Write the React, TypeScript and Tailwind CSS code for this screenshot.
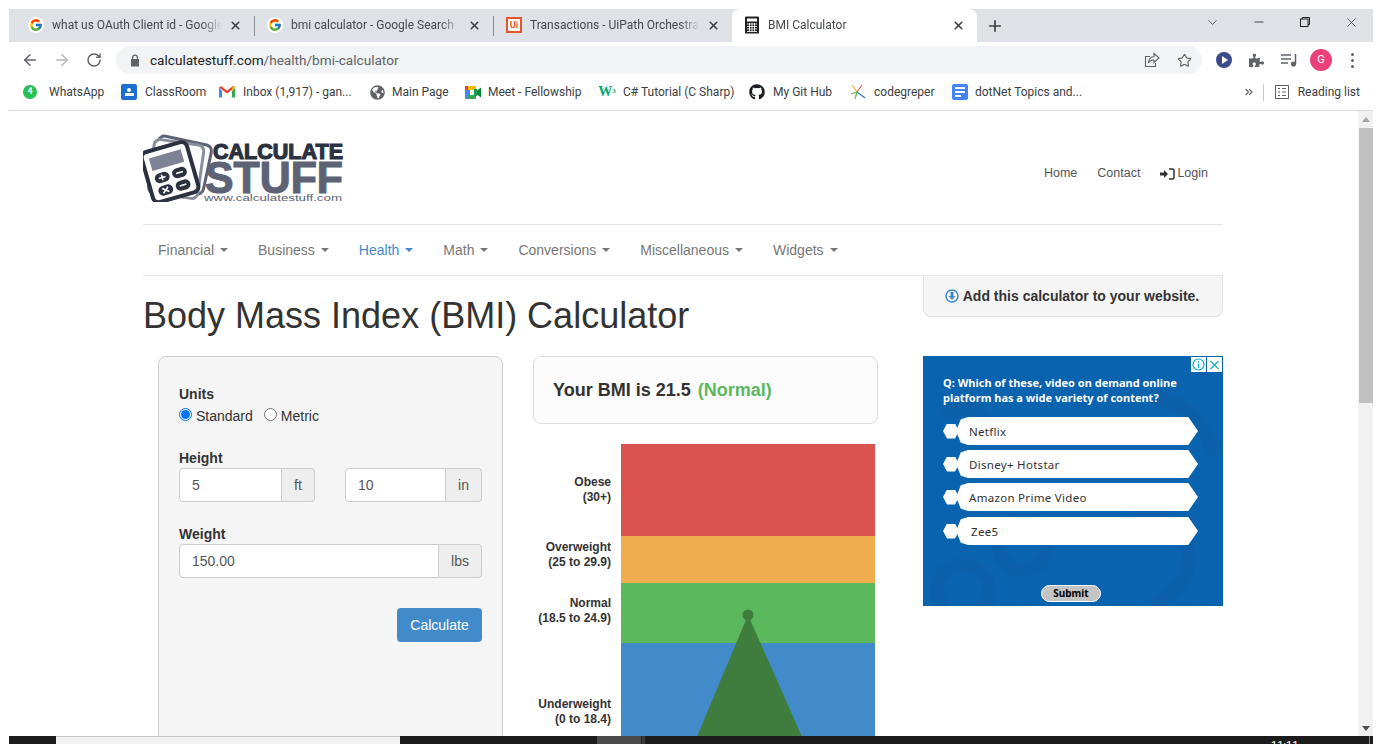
import { ArrowLeft, ArrowRight, RotateCw, Star, X, Plus, Minus, ChevronDown, ChevronsRight } from "lucide-react";
import { FaGithub, FaGlobeAmericas, FaPuzzlePiece } from "react-icons/fa";
import { FcGoogle } from "react-icons/fc";

const GoogleIcon = () => (
    <span className="flex h-4 w-4 items-center justify-center rounded-full bg-white">
        <FcGoogle className="h-[14px] w-[14px]" />
    </span>
);

const CalcIcon = () => (
    <svg width="16" height="18" viewBox="0 0 16 18">
        <rect x="1" y="0.5" width="14" height="17" rx="1" fill="#222" />
        <rect x="3" y="2.5" width="10" height="3" fill="#fff" />
        <path d="M3 8h10M3 10.5h10M3 13h10M3 15.5h10M5.5 7v9M8 7v9M10.5 7v9" stroke="#fff" strokeWidth="0.8" />
    </svg>
);

const UiPathIcon = () => (
    <span className="flex h-4 w-4 items-center justify-center border-2 border-[#e8532b] bg-white text-[9px] font-bold leading-none text-[#e8532b]">Ui</span>
);

const Tab = ({ icon, title, width, active }: { icon: React.ReactNode; title: string; width: string; active?: boolean }) => (
    <div className={`flex h-full shrink-0 items-center pb-px ${width} ${active ? "rounded-t-lg bg-white" : ""}`}>
        <span className="ml-[12px] w-[16px] shrink-0">{icon}</span>
        <span className="ml-[8px] min-w-0 flex-1 overflow-hidden whitespace-nowrap text-[12px] text-[#45494d] [mask-image:linear-gradient(to_right,black_88%,transparent)]">{title}</span>
        <X className="ml-[7px] mr-[12px] h-[13px] w-[13px] shrink-0 text-[#3c4043]" strokeWidth={3} />
    </div>
);

const TabSep = () => <div className="h-5 w-px shrink-0 bg-[#8a8d91]" />;

const Bookmark = ({ icon, label, width, gap = "ml-[8px]" }: { icon: React.ReactNode; label: string; width: string; gap?: string }) => (
    <div className={`flex shrink-0 items-center ${width}`}>
        <span className="flex w-4 shrink-0 justify-center">{icon}</span>
        <span className={`${gap} whitespace-nowrap text-[12px] text-[#3c4043]`}>{label}</span>
    </div>
);

const Logo = () => (
    <svg width="204" height="68" viewBox="0 0 204 68">
        <rect x="11" y="6" width="54" height="50" rx="6" fill="none" stroke="#5d6375" strokeWidth="3" transform="rotate(12 38 31)" />
        <rect x="8" y="8" width="50" height="54" rx="6" fill="#fff" stroke="#8a8f9e" strokeWidth="3" transform="rotate(8 33 35)" />
        <g transform="translate(-2.500 2) rotate(-16 30 36)">
            <rect x="6" y="10" width="47" height="52" rx="6" fill="#fff" stroke="#2c3140" strokeWidth="4" />
            <rect x="13" y="17" width="33" height="13" fill="#7d8394" />
            <rect x="13" y="34" width="15" height="10" rx="5" fill="#2c3140" />
            <rect x="31" y="34" width="15" height="10" rx="5" fill="#2c3140" />
            <rect x="13" y="47" width="15" height="10" rx="5" fill="#2c3140" />
            <rect x="31" y="47" width="15" height="10" rx="5" fill="#2c3140" />
            <path d="M17 39h7M20.5 36v6M35 39h7M17.5 49.5l6 5M23.5 49.5l-6 5M35 52h7" stroke="#fff" strokeWidth="1.6" />
        </g>
        <text x="70" y="25" textLength="130" lengthAdjust="spacingAndGlyphs" fontFamily="'Liberation Sans', sans-serif" fontWeight="700" fontSize="22" fill="#2c3140" stroke="#2c3140" strokeWidth="1.2">CALCULATE</text>
        <text x="62" y="59" textLength="138" lengthAdjust="spacingAndGlyphs" fontFamily="'Liberation Sans', sans-serif" fontWeight="700" fontSize="44" fill="#5d6375" stroke="#5d6375" strokeWidth="1.2">STUFF</text>
        <text x="61" y="67" textLength="138" lengthAdjust="spacingAndGlyphs" fontFamily="'Liberation Sans', sans-serif" fontSize="9" fill="#5d6375">www.calculatestuff.com</text>
    </svg>
);

const Caret = ({ color }: { color: string }) => (
    <span className={`ml-[6px] inline-block h-0 w-0 border-x-4 border-t-4 border-x-transparent align-middle ${color}`} />
);

const NavItem = ({ label, active }: { label: string; active?: boolean }) => (
    <div className={`flex items-center px-[15px] text-[14px] ${active ? "text-[#428bca]" : "text-[#777]"}`}>
        {label}
        <Caret color={active ? "border-t-[#428bca]" : "border-t-[#777]"} />
    </div>
);

const InputGroup = ({ value, unit, inputWidth, unitWidth }: { value: string; unit: string; inputWidth: string; unitWidth: string }) => (
    <div className="flex h-[34px] text-[14px]">
        <div className={`flex items-center rounded-l border border-[#ccc] bg-white pl-3 text-[#555] ${inputWidth}`}>{value}</div>
        <div className={`flex items-center justify-center rounded-r border border-l-0 border-[#ccc] bg-[#eee] text-[#555] ${unitWidth}`}>{unit}</div>
    </div>
);

const Radio = ({ checked }: { checked?: boolean }) => (
    <span className={`-mt-[4px] flex h-[13px] w-[13px] shrink-0 items-center justify-center rounded-full border bg-white ${checked ? "border-[#0075ff]" : "border-[#767676]"}`}>
        {checked && <span className="h-[9px] w-[9px] rounded-full bg-[#0075ff]" />}
    </span>
);

const ScaleBand = ({ label, range, bg, height, labelPos }: { label: string; range: string; bg: string; height: string; labelPos: string }) => (
    <div className={`flex ${height}`}>
        <div className={`flex w-[78px] shrink-0 flex-col text-right text-[12px] font-bold leading-[15px] text-[#333] ${labelPos}`}>
            <span>{label}</span>
            <span>{range}</span>
        </div>
        <div className={`ml-[10px] w-[254px] shrink-0 ${bg}`} />
    </div>
);

const AdOption = ({ label, mt, pad }: { label: string; mt: string; pad: string }) => (
    <div className={`flex h-[28px] items-center ${mt}`}>
        <span className="h-[15px] w-[16px] shrink-0 bg-white [clip-path:polygon(25%_0,75%_0,100%_50%,75%_100%,25%_100%,0_50%)]" />
        <div className={`-ml-[3px] flex h-full w-[242px] items-center bg-white pt-[2px] text-[11.5px] tracking-[0.3px] text-[#333] [clip-path:polygon(5%_0,96%_0,100%_50%,96%_100%,5%_100%,2%_92%,0_50%,2%_8%)] ${pad}`}>{label}</div>
    </div>
);

const Ad = () => (
    <div className="relative h-[250px] w-[300px] overflow-hidden bg-[#0a63ae] pl-5 pt-[19px] font-['Noto_Sans',sans-serif]">
        <svg className="absolute inset-0" width="300" height="250" viewBox="0 0 300 250">
            <g fill="none" stroke="#0d5fa6" strokeWidth="14" opacity="0.6">
                <circle cx="40" cy="235" r="26" />
                <circle cx="100" cy="190" r="24" />
                <path d="M200 170q40-30 60 10t-30 70" />
                <path d="M230 40q50 10 60 60" />
                <path d="M20 60q30-20 50 10" />
            </g>
        </svg>
        <div className="absolute right-[1px] top-[1px] flex h-[15px] gap-px">
            <span className="flex w-[15px] items-center justify-center bg-white">
                <svg width="13" height="13" viewBox="0 0 13 13" fill="none" stroke="#00aecd" strokeWidth="1.200"><circle cx="6.500" cy="6.500" r="5.500" /><path d="M6.500 5.500v4.500M6.500 3v1.500" /></svg>
            </span>
            <span className="flex w-[15px] items-center justify-center bg-white">
                <X className="h-[16px] w-[16px] text-[#00aecd]" strokeWidth={1.8} />
            </span>
        </div>
        <div className="relative text-[11px] font-bold leading-[15px] text-white">
            <p>Q: Which of these, video on demand online</p>
            <p>platform has a wide variety of content?</p>
        </div>
        <div className="relative mt-[12px]">
            <AdOption label="Netflix" mt="" pad="pl-[13px]" />
            <AdOption label="Disney+ Hotstar" mt="mt-[5px]" pad="pl-[13px]" />
            <AdOption label="Amazon Prime Video" mt="mt-[5px]" pad="pl-[13px]" />
            <AdOption label="Zee5" mt="mt-[6px]" pad="pl-[15px]" />
        </div>
        <div className="relative ml-[98px] mt-[40px] flex h-[17px] w-[60px] items-center justify-center rounded-full border border-white bg-[#c4c4c4] text-[10px] font-bold text-black">Submit</div>
    </div>
);

export default function App() {
    return (
        <div className="flex h-[744px] w-[1382px] flex-col overflow-hidden bg-white pt-[9px] font-['Roboto',sans-serif]">
            <div className="mx-[9px] flex h-[727px] flex-col overflow-hidden">
                {/* tab strip */}
                <div className="flex h-[33px] shrink-0 items-center bg-[#dee1e6] pl-[7px]">
                    <Tab icon={<GoogleIcon />} title="what us OAuth Client id - Google Search" width="w-[238px]" />
                    <TabSep />
                    <Tab icon={<GoogleIcon />} title="bmi calculator - Google Search" width="w-[238px]" />
                    <TabSep />
                    <Tab icon={<UiPathIcon />} title="Transactions - UiPath Orchestrator" width="w-[238px]" />
                    <Tab icon={<CalcIcon />} title="BMI Calculator" width="w-[245px]" active />
                    <Plus className="ml-[9px] h-[18px] w-[18px] text-[#3c4043]" strokeWidth={2.2} />
                    <div className="-mt-[7px] ml-auto flex items-center text-[#333]">
                        <ChevronDown className="h-[15px] w-[15px]" strokeWidth={1.2} />
                        <Minus className="ml-[32px] h-[14px] w-[14px]" strokeWidth={1.5} />
                        <svg className="ml-[33px]" width="12" height="12" viewBox="0 0 12 12" fill="none" stroke="#222"><path d="M3.5 3V1.5h7v7H9" /><rect x="1.5" y="3" width="7.5" height="7.5" /></svg>
                        <X className="ml-[33px] mr-[14px] h-[15px] w-[15px]" strokeWidth={1.2} />
                    </div>
                </div>
                {/* toolbar */}
                <div className="flex h-[34px] shrink-0 items-center bg-white pt-[2px]">
                    <ArrowLeft className="ml-[12px] h-[18px] w-[18px] text-[#5f6368]" strokeWidth={2} />
                    <ArrowRight className="ml-[14px] h-[18px] w-[18px] text-[#b4b7bb]" strokeWidth={2} />
                    <RotateCw className="ml-[15px] h-[16px] w-[16px] text-[#5f6368]" strokeWidth={2.2} />
                    <div className="ml-[14px] flex h-[28px] w-[1086px] items-center rounded-full bg-[#f1f3f4] pl-[14px]">
                        <svg width="10" height="13" viewBox="0 0 10 13" fill="#5f6368"><path d="M2 5V3.5a3 3 0 0 1 6 0V5h1v7.5H1V5zm1.2 0h3.6V3.5a1.8 1.8 0 0 0-3.6 0z" /></svg>
                        <span className="ml-[10px] text-[13.6px] text-[#5f6368]"><span className="text-[#202124]">calculatestuff.com</span>/health/bmi-calculator</span>
                        <svg className="ml-auto" width="16" height="16" viewBox="0 0 16 16" fill="none" stroke="#5f6368" strokeWidth="1.1"><path d="M6 4.5H1.5v10h10V11" /><path d="M10 1.5l5 4.5-5 4.5V8C7 8 5.500 9 4.500 11c0-4 2-6 5.500-6.500z" /></svg>
                        <Star className="ml-[17px] mr-[10px] h-[15px] w-[15px] text-[#5f6368]" strokeWidth={1.8} />
                    </div>
                    <svg className="ml-[13px]" width="18" height="18" viewBox="0 0 18 18"><circle cx="9" cy="9" r="8" fill="#3b4a8c" /><path d="M7 5l6 4-6 4z" fill="#fff" /></svg>
                    <FaPuzzlePiece className="ml-[16px] h-[15px] w-[15px] text-[#5f6368]" />
                    <svg className="ml-[17px]" width="16" height="14" viewBox="0 0 16 14" fill="none" stroke="#5f6368" strokeWidth="1.5"><path d="M0 2h10M0 6h10M0 10h7M14.500 1v10" /><circle cx="12.500" cy="11" r="1.800" fill="#5f6368" /></svg>
                    <span className="ml-[13px] flex h-[22px] w-[22px] items-center justify-center rounded-full bg-[#ec407a] text-[11px] text-white">G</span>
                    <div className="ml-[19px] flex flex-col gap-[3px]">
                        <span className="h-[3px] w-[3px] rounded-full bg-[#5f6368]" />
                        <span className="h-[3px] w-[3px] rounded-full bg-[#5f6368]" />
                        <span className="h-[3px] w-[3px] rounded-full bg-[#5f6368]" />
                    </div>
                </div>
                {/* bookmarks bar */}
                <div className="flex h-[35px] shrink-0 items-center border-b border-[#dadce0] bg-white pb-[2px] pl-[13px]">
                    <Bookmark width="w-[99px]" gap="ml-[11px]" label="WhatsApp" icon={<span className="flex h-[14px] w-[14px] items-center justify-center rounded-full bg-[#25c14f] text-[9px] font-bold text-white">4</span>} />
                    <Bookmark width="w-[98px]" label="ClassRoom" icon={
                        <span className="flex h-[16px] w-[16px] flex-col items-center justify-center rounded-[2px] bg-[#1a6fd0]"><span className="h-[4px] w-[4px] rounded-full bg-white" /><span className="mt-px h-[3px] w-[9px] bg-white" /></span>
                    } />
                    <Bookmark width="w-[150px]" label="Inbox (1,917) - gan..." icon={
                        <svg width="16" height="12" viewBox="0 0 16 12"><path d="M0 1.500v10h3V5z" fill="#4285f4" /><path d="M16 1.500v10h-3V5z" fill="#34a853" /><path d="M0 1.500 8 7.500l8-6L14 0 8 4.500 2 0z" fill="#ea4335" /><path d="M13 5l3-3.500V0l-3 2z" fill="#fbbc04" /></svg>
                    } />
                    <Bookmark width="w-[96px]" gap="ml-[7px]" label="Main Page" icon={<FaGlobeAmericas className="h-[15px] w-[15px] text-[#5f6368]" />} />
                    <Bookmark width="w-[134px]" gap="ml-[7px]" label="Meet - Fellowship" icon={
                        <svg width="16" height="13" viewBox="0 0 16 13"><rect x="0" y="0" width="5" height="13" rx="1" fill="#4285f4" /><rect x="3" y="0" width="8" height="4" fill="#fbbc04" /><rect x="3" y="9" width="8" height="4" fill="#34a853" /><rect x="9" y="3" width="3" height="7" fill="#0f9d58" /><path d="M12 4.500l4-3v10l-4-3z" fill="#00832d" /><rect x="0" y="0" width="3" height="4" fill="#ea4335" /></svg>
                    } />
                    <Bookmark width="w-[150px]" label="C# Tutorial (C Sharp)" icon={<span className="font-['Liberation_Serif',serif] text-[14px] font-bold leading-none text-[#04aa6d]">W<sup className="text-[7px]">3</sup></span>} />
                    <Bookmark width="w-[101px]" label="My Git Hub" icon={<FaGithub className="h-[16px] w-[16px] text-[#1b1f23]" />} />
                    <Bookmark width="w-[102px]" label="codegreper" icon={
                        <svg width="16" height="16" viewBox="0 0 16 16" fill="none" strokeWidth="1.2"><path d="M7 8L2 1" stroke="#f2b134" /><path d="M7 8l5-7" stroke="#e35d5b" /><path d="M7 8l-6 2" stroke="#6cc04a" /><path d="M7 8l8 6" stroke="#3f6fb5" /><path d="M7 8l-2 7" stroke="#6cc04a" /></svg>
                    } />
                    <Bookmark width="w-[130px]" gap="ml-[7px]" label="dotNet Topics and..." icon={
                        <span className="flex h-[16px] w-[16px] flex-col justify-center gap-[2px] rounded-[2px] bg-[#4285f4] px-[3px]"><span className="h-[2px] bg-white" /><span className="h-[2px] bg-white" /><span className="h-[2px] w-[6px] bg-white" /></span>
                    } />
                    <div className="ml-auto flex items-center">
                        <ChevronsRight className="h-[12px] w-[12px] text-[#5f6368]" strokeWidth={2.5} />
                        <span className="ml-[8px] h-[17px] w-px bg-[#c6c8cb]" />
                        <svg className="ml-[11px]" width="14" height="14" viewBox="0 0 14 14" fill="none" stroke="#5f6368"><rect x="0.500" y="0.500" width="13" height="13" /><path d="M3 3.500h2M7 3.500h4M3 7h2M7 7h4M3 10.500h2M7 10.500h4" /></svg>
                        <span className="ml-[9px] mr-[13px] text-[12px] text-[#3c4043]">Reading list</span>
                    </div>
                </div>
                {/* page */}
                <div className="flex min-h-0 flex-1 font-['Liberation_Sans',sans-serif] text-[#333]">
                    <div className="min-w-0 flex-1 overflow-hidden">
                        <div className="ml-[134px] w-[1080px]">
                            <div className="flex h-[114px] items-center justify-between border-b border-[#e5e5e5]">
                                <Logo />
                                <div className="mt-[12px] flex items-center gap-[20px] pr-[15px] text-[12.5px] text-[#555]">
                                    <span>Home</span>
                                    <span>Contact</span>
                                    <span className="flex items-center">
                                        <svg className="mr-[2px]" width="15" height="12" viewBox="0 0 15 12"><path d="M0 4.500h4V2l4 4-4 4V7.500H0z" fill="#333" /><path d="M9 1h3.500A1.500 1.500 0 0 1 14 2.500v7a1.500 1.500 0 0 1-1.500 1.500H9" fill="none" stroke="#333" strokeWidth="1.500" /></svg>
                                        Login
                                    </span>
                                </div>
                            </div>
                            <nav className="flex h-[51px] items-center border-b border-[#e7e7e7]">
                                <NavItem label="Financial" />
                                <NavItem label="Business" />
                                <NavItem label="Health" active />
                                <NavItem label="Math" />
                                <NavItem label="Conversions" />
                                <NavItem label="Miscellaneous" />
                                <NavItem label="Widgets" />
                            </nav>
                            <div className="flex h-[80px] items-start justify-between">
                                <h1 className="mt-[20px] text-[36px] font-normal leading-[40px] text-[#333]">Body Mass Index (BMI) Calculator</h1>
                                <div className="flex h-[41px] w-[300px] items-center justify-center rounded-b-lg border border-t-0 border-[#e3e3e3] bg-[#f5f5f5] pr-[2px] text-[14px] font-bold">
                                    <svg className="mr-[4px]" width="14" height="14" viewBox="0 0 14 14"><circle cx="7" cy="7" r="6" fill="none" stroke="#428bca" strokeWidth="1.500" /><path d="M5.500 3h3v4h2L7 11 3.500 7h2z" fill="#428bca" /></svg>
                                    Add this calculator to your website.
                                </div>
                            </div>
                            <div className="flex items-start">
                                {/* form */}
                                <div className="ml-[15px] h-[400px] w-[345px] rounded-lg border border-[#ccc] bg-[#f5f5f5] px-[20px] pt-[29px] text-[14px]">
                                    <div className="font-bold leading-[16px]">Units</div>
                                    <div className="mt-[4px] flex items-center text-[14px] leading-[20px] text-[#333]">
                                        <Radio checked />
                                        <span className="ml-[4px]">Standard</span>
                                        <span className="ml-[11px]"><Radio /></span>
                                        <span className="ml-[4px]">Metric</span>
                                    </div>
                                    <div className="mt-[24px] font-bold leading-[16px]">Height</div>
                                    <div className="mt-[2px] flex justify-between">
                                        <InputGroup value="5" unit="ft" inputWidth="w-[103px]" unitWidth="w-[33px]" />
                                        <InputGroup value="10" unit="in" inputWidth="w-[101px]" unitWidth="w-[36px]" />
                                    </div>
                                    <div className="mt-[24px] font-bold leading-[16px]">Weight</div>
                                    <div className="mt-[2px]">
                                        <InputGroup value="150.00" unit="lbs" inputWidth="w-[260px]" unitWidth="w-[43px]" />
                                    </div>
                                    <div className="mt-[30px] flex justify-end">
                                        <div className="flex h-[34px] w-[85px] items-center justify-center rounded bg-[#428bca] text-white">Calculate</div>
                                    </div>
                                </div>
                                {/* result */}
                                <div className="ml-[30px] w-[345px]">
                                    <div className="flex h-[68px] items-center rounded-lg border border-[#ddd] bg-[#fcfcfc] pl-[19px] text-[18px] font-bold">
                                        Your BMI is 21.5&nbsp;<span className="ml-[2px] text-[#5cb85c]">(Normal)</span>
                                    </div>
                                    <div className="relative mt-[20px]">
                                        <ScaleBand label="Obese" range="(30+)" bg="bg-[#d9534f]" height="h-[92px]" labelPos="pt-[31px]" />
                                        <ScaleBand label="Overweight" range="(25 to 29.9)" bg="bg-[#f0ad4e]" height="h-[47px]" labelPos="pt-[4px]" />
                                        <ScaleBand label="Normal" range="(18.5 to 24.9)" bg="bg-[#5cb85c]" height="h-[60px]" labelPos="pt-[13px]" />
                                        <ScaleBand label="Underweight" range="(0 to 18.4)" bg="bg-[#428bca]" height="h-[120px]" labelPos="pt-[54px]" />
                                        <svg className="absolute left-[150px] top-[165px]" width="120" height="130" viewBox="0 0 120 130">
                                            <circle cx="65" cy="6" r="5.500" fill="#3e7d3e" />
                                            <path d="M65 6L120 130H13z" fill="#3e7d3e" />
                                        </svg>
                                    </div>
                                </div>
                                <div className="ml-[45px]"><Ad /></div>
                            </div>
                        </div>
                    </div>
                    {/* scrollbar */}
                    <div className="flex w-[15px] shrink-0 flex-col items-center bg-[#f1f1f1]">
                        <span className="mt-[6px] h-0 w-0 border-x-[4px] border-b-[5px] border-x-transparent border-b-[#a3a3a3]" />
                        <div className="mt-[6px] h-[275px] w-[14px] bg-[#c1c1c1]" />
                        <span className="mb-[5px] mt-auto h-0 w-0 border-x-[4px] border-t-[5px] border-x-transparent border-t-[#505050]" />
                    </div>
                </div>
            </div>
            {/* taskbar, mostly cut off by the window edge */}
            <div className="mx-[9px] flex h-[8px] shrink-0 overflow-hidden bg-[#1c1c1c]">
                <div className="ml-[47px] h-full w-[344px] border-t border-[#c8c8c8] bg-[#f2f2f2]" />
                <div className="ml-[197px] h-full w-[44px] bg-[#4a4a4a]" />
                <div className="ml-px h-full w-[3px] bg-[#3a3a3a]" />
                <span className="ml-[626px] pt-[4px] text-[11px] leading-[12px] text-white">11:11</span>
                <div className="ml-auto mr-[3px] h-full w-px bg-[#8a8a8a]" />
            </div>
        </div>
    );
}
